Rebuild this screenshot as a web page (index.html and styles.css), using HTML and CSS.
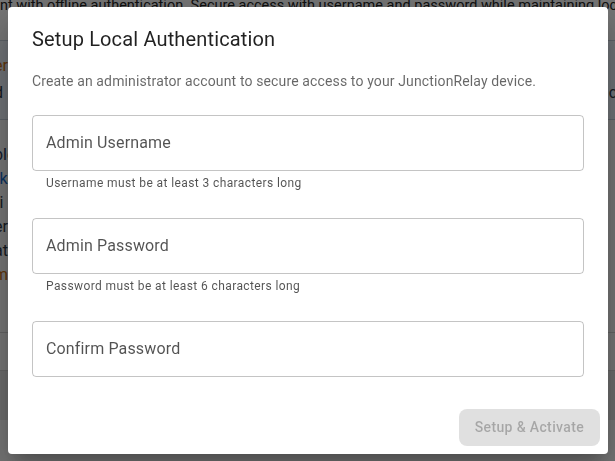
FILE: index.html
```html
<!DOCTYPE html>
<html lang="en">
<head>
<meta charset="utf-8">
<title>Setup Local Authentication</title>
<link rel="stylesheet" href="styles.css">
</head>
<body>
<div class="page">
  <p class="intro">nt with offline authentication. Secure access with username and password while maintaining local control of your device settings.</p>
  <div class="info-box">
    <div class="row"><span class="frag warn">er</span><span class="frag"></span></div>
    <div class="row"><span class="frag dark">d</span><span class="frag dark">c</span></div>
  </div>
  <div class="list">
    <div class="row"><span class="frag navy">ble</span></div>
    <div class="row"><span class="frag blue">rk</span></div>
    <div class="row"><span class="frag dark">ri</span></div>
    <div class="row"><span class="frag dark">er</span></div>
    <div class="row"><span class="frag dark">at</span></div>
    <div class="row"><span class="frag warn">m</span></div>
  </div>
  <div class="table-row"></div>
  <div class="table-row dim"></div>
</div>

<div class="backdrop">
  <div class="dialog" role="dialog" aria-labelledby="dlg-title">
    <h2 class="dialog-title" id="dlg-title">Setup Local Authentication</h2>
    <div class="dialog-content">
      <p class="dialog-text">Create an administrator account to secure access to your JunctionRelay device.</p>
      <div class="field">
        <div class="input-box"><span class="input-label">Admin Username</span></div>
        <p class="helper">Username must be at least 3 characters long</p>
      </div>
      <div class="field">
        <div class="input-box"><span class="input-label">Admin Password</span></div>
        <p class="helper">Password must be at least 6 characters long</p>
      </div>
      <div class="field">
        <div class="input-box"><span class="input-label">Confirm Password</span></div>
      </div>
    </div>
    <div class="dialog-actions">
      <button class="btn-disabled" disabled>Setup &amp; Activate</button>
    </div>
  </div>
</div>
</body>
</html>
```

FILE: styles.css
```css
* { box-sizing: border-box; }

html, body {
  margin: 0;
  padding: 0;
  width: 615px;
  height: 461px;
  overflow: hidden;
  font-family: Roboto, "Liberation Sans", sans-serif;
  background: #ececec;
}

.page {
  width: 615px;
  height: 461px;
  overflow: hidden;
  display: flex;
  flex-direction: column;
}

.intro {
  margin: -4px 0 0 0;
  font-size: 14.5px;
  line-height: 20px;
  color: #222;
  white-space: nowrap;
  overflow: hidden;
}

.info-box {
  margin-top: 24px;
  height: 80px;
  background: #dfe6ee;
  border-top: 1px solid #b9c3cf;
  border-bottom: 1px solid #b9c3cf;
  display: flex;
  flex-direction: column;
  padding-top: 14px;
  gap: 6px;
}

.row {
  display: flex;
  justify-content: space-between;
  height: 21px;
  font-size: 16px;
  line-height: 21px;
  white-space: nowrap;
}

.frag { display: block; margin-left: -6px; }
.frag + .frag { margin-left: 0; margin-right: -2px; }

.warn { color: #c16a12; }
.dark { color: #2c3440; }
.navy { color: #1d3557; }
.blue { color: #1565c0; }

.list {
  display: flex;
  flex-direction: column;
  padding-top: 24px;
  gap: 3px;
  height: 213px;
  border-bottom: 1px solid #c8c8c8;
}

.table-row {
  height: 38px;
  border-bottom: 1px solid #c8c8c8;
}
.table-row.dim {
  height: 49px;
  background: #d8d8d8;
  border-bottom: none;
}

/* overlay dialog */
.backdrop {
  position: fixed;
  inset: 0;
  background: rgba(0, 0, 0, 0.5);
  display: flex;
  align-items: flex-start;
  justify-content: flex-start;
  padding: 7px 7px 7px 8px;
}

.dialog {
  width: 600px;
  height: 447px;
  background: #fff;
  border-radius: 4px;
  box-shadow: 0 11px 15px -7px rgba(0,0,0,0.2), 0 24px 38px 3px rgba(0,0,0,0.14), 0 9px 46px 8px rgba(0,0,0,0.12);
  display: flex;
  flex-direction: column;
  color: rgba(0, 0, 0, 0.87);
}

.dialog-title {
  margin: 0;
  padding: 16px 24px;
  font-size: 20px;
  font-weight: 400;
  line-height: 32px;
  letter-spacing: 0.0075em;
  color: rgba(0, 0, 0, 0.87);
}

.dialog-content {
  padding: 0 24px;
  flex: 1;
  display: flex;
  flex-direction: column;
}

.dialog-text {
  margin: 0 0 8px 0;
  font-size: 14px;
  line-height: 20px;
  letter-spacing: 0.00938em;
  color: rgba(0, 0, 0, 0.6);
}

.field {
  margin: 16px 0 8px;
}

.input-box {
  height: 56px;
  border: 1px solid rgba(0, 0, 0, 0.23);
  border-radius: 4px;
  display: flex;
  align-items: center;
  padding: 0 13px 2px;
}

.input-label {
  font-size: 16px;
  line-height: 23px;
  letter-spacing: 0.00938em;
  color: rgba(0, 0, 0, 0.68);
}

.helper {
  margin: 2px 14px 0;
  font-size: 12px;
  line-height: 21px;
  letter-spacing: 0.03333em;
  color: rgba(0, 0, 0, 0.68);
}

.dialog-actions {
  display: flex;
  justify-content: flex-end;
  padding: 8px;
}

.btn-disabled {
  font-family: Roboto, "Liberation Sans", sans-serif;
  font-size: 14px;
  font-weight: 500;
  letter-spacing: 0.025em;
  line-height: 25px;
  height: 37px;
  padding: 6px 16px;
  border: none;
  border-radius: 8px;
  background: rgba(0, 0, 0, 0.12);
  color: rgba(0, 0, 0, 0.26);
  text-transform: none;
}
```
